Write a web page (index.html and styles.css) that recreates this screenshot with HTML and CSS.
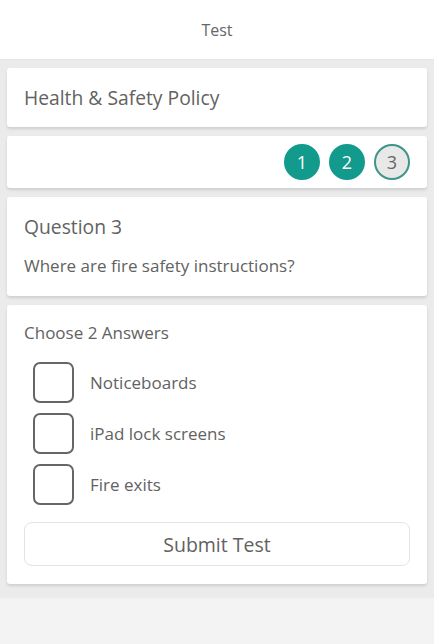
FILE: index.html
```html
<!DOCTYPE html>
<html lang="en">
<head>
    <meta charset="UTF-8">
    <meta name="viewport" content="width=device-width, initial-scale=1.0">
    <title>Test</title>
    <link rel="stylesheet" href="styles.css">
</head>
<body>
    <div class="header">Test</div>
    <div class="content">
        <div class="card title-card">Health &amp; Safety Policy</div>
        <div class="card steps-card">
            <span class="step done">1</span>
            <span class="step done">2</span>
            <span class="step current">3</span>
        </div>
        <div class="card question-card">
            <h2>Question 3</h2>
            <p>Where are fire safety instructions?</p>
        </div>
        <div class="card answers-card">
            <div class="choose">Choose 2 Answers</div>
            <ul class="answers">
                <li><span class="box"></span>Noticeboards</li>
                <li><span class="box"></span>iPad lock screens</li>
                <li><span class="box"></span>Fire exits</li>
            </ul>
            <button class="submit-btn">Submit Test</button>
        </div>
    </div>
</body>
</html>
```

FILE: styles.css
```css
body {
    margin: 0;
    font-family: 'Open Sans', 'Noto Sans', sans-serif;
    background: #f3f3f3;
    color: #626262;
}

.header {
    height: 60px;
    background: #fff;
    display: flex;
    align-items: center;
    justify-content: center;
    font-size: 16px;
    color: #666;
    border-bottom: 1px solid #e4e4e4;
    box-sizing: border-box;
}

.content {
    background: #ebebeb;
    padding: 8px 7px 14px;
    display: flex;
    flex-direction: column;
    gap: 9px;
}

.card {
    background: #fff;
    border-radius: 3px;
    box-shadow: 0 2px 3px rgba(0, 0, 0, 0.12);
    padding: 0 17px;
}

.title-card {
    height: 59px;
    display: flex;
    align-items: center;
    font-size: 19.3px;
}

.steps-card {
    height: 52px;
    display: flex;
    align-items: center;
    justify-content: flex-end;
    gap: 9px;
}

.step {
    width: 36px;
    height: 36px;
    border-radius: 50%;
    box-sizing: border-box;
    display: flex;
    align-items: center;
    justify-content: center;
    font-size: 18px;
}

.step.done {
    background: #129a8d;
    color: #fff;
}

.step.current {
    background: #e8e8e8;
    border: 2px solid #3d9588;
    color: #666;
}

.question-card {
    height: 99px;
    box-sizing: border-box;
    padding-top: 16px;
}

.question-card h2 {
    margin: 0;
    font-size: 19.3px;
    font-weight: normal;
    line-height: 28px;
}

.question-card p {
    margin: 13px 0 0;
    font-size: 17px;
    line-height: 24px;
}

.answers-card {
    padding-top: 16px;
    padding-bottom: 18px;
}

.choose {
    font-size: 17px;
    line-height: 24px;
}

.answers {
    list-style: none;
    margin: 17px 0 0;
    padding: 0 0 0 9px;
    display: flex;
    flex-direction: column;
    gap: 10px;
}

.answers li {
    display: flex;
    align-items: center;
    gap: 16px;
    font-size: 17px;
}

.box {
    width: 41px;
    height: 41px;
    box-sizing: border-box;
    border: 2px solid #666;
    border-radius: 7px;
}

.submit-btn {
    display: block;
    width: 100%;
    height: 44px;
    margin-top: 17px;
    background: #fff;
    border: 1px solid #e3e3e3;
    border-radius: 8px;
    font-family: inherit;
    font-size: 19.5px;
    color: #626262;
}
```
